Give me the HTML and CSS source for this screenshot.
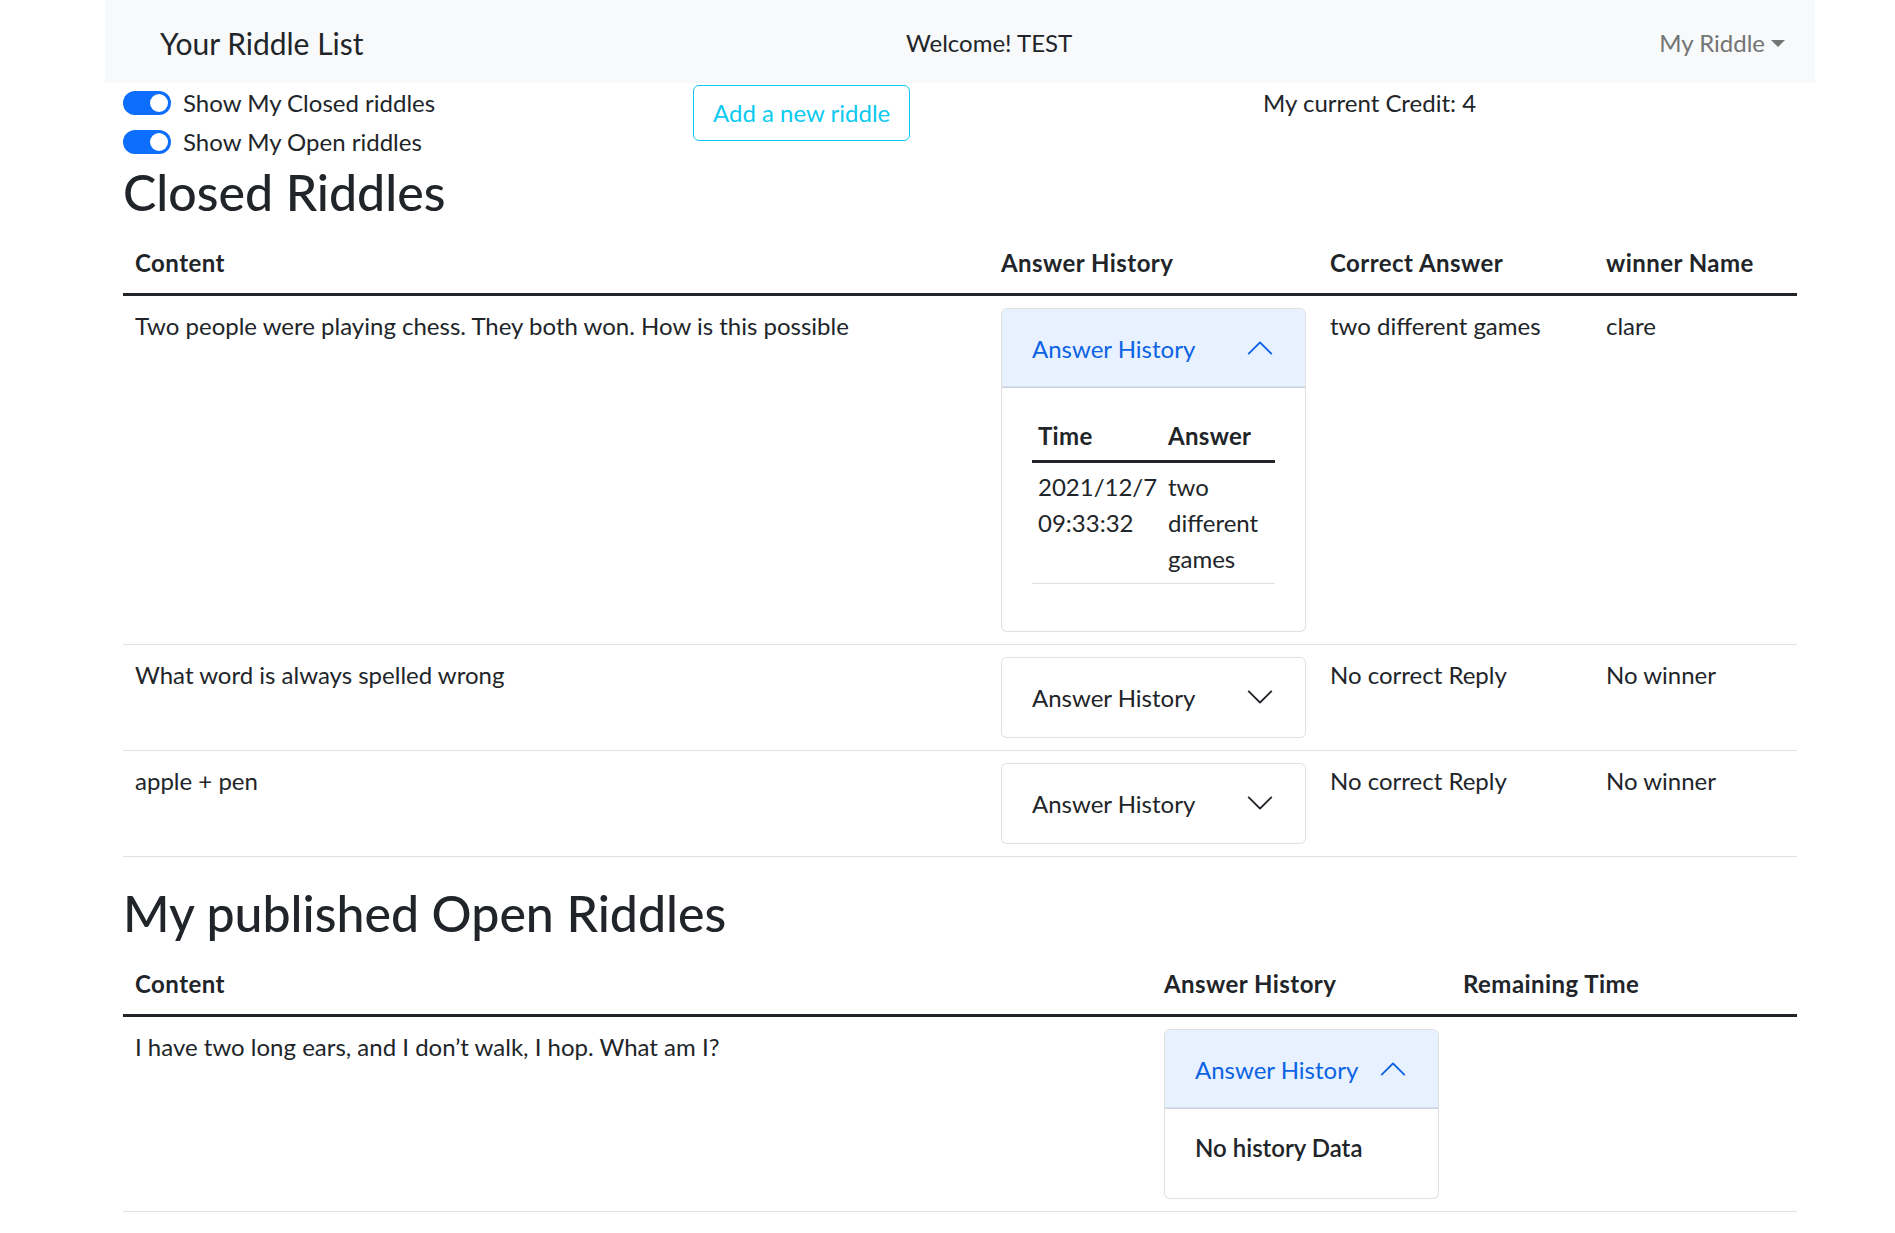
FILE: index.html
```html
<!DOCTYPE html>
<html lang="en">
<head>
<meta charset="utf-8">
<title>Your Riddle List</title>
<link rel="stylesheet" href="styles.css">
</head>
<body>
<div class="page">
  <nav class="navbar">
    <div class="brand">Your Riddle List</div>
    <div class="welcome">Welcome! TEST</div>
    <div class="dropdown">My Riddle<span class="caret"></span></div>
  </nav>
  <main class="container">
    <div class="controls">
      <div class="col">
        <label class="switch-row"><span class="switch"><span class="knob"></span></span>Show My Closed riddles</label>
        <label class="switch-row"><span class="switch"><span class="knob"></span></span>Show My Open riddles</label>
      </div>
      <div class="col">
        <button class="btn-outline">Add a new riddle</button>
      </div>
      <div class="col">
        <div class="credit">My current Credit: 4</div>
      </div>
    </div>

    <h2 class="section-title">Closed Riddles</h2>
    <table class="table">
      <colgroup><col class="c-content1"><col class="c-hist1"><col class="c-correct"><col class="c-winner"></colgroup>
      <thead>
        <tr><th>Content</th><th>Answer History</th><th>Correct Answer</th><th>winner Name</th></tr>
      </thead>
      <tbody>
        <tr>
          <td>Two people were playing chess. They both won. How is this possible</td>
          <td>
            <div class="acc">
              <div class="acc-btn open">Answer History
                <svg class="acc-icon" viewBox="0 0 16 16"><path fill-rule="evenodd" d="M1.646 4.646a.5.5 0 0 1 .708 0L8 10.293l5.646-5.647a.5.5 0 0 1 .708.708l-6 6a.5.5 0 0 1-.708 0l-6-6a.5.5 0 0 1 0-.708z"/></svg>
              </div>
              <div class="acc-body">
                <table class="table-sm">
                  <colgroup><col class="c-time"><col class="c-answer"></colgroup>
                  <thead><tr><th>Time</th><th>Answer</th></tr></thead>
                  <tbody><tr><td>2021/12/7 09:33:32</td><td>two different games</td></tr></tbody>
                </table>
              </div>
            </div>
          </td>
          <td>two different games</td>
          <td>clare</td>
        </tr>
        <tr>
          <td>What word is always spelled wrong</td>
          <td>
            <div class="acc">
              <div class="acc-btn">Answer History
                <svg class="acc-icon" viewBox="0 0 16 16"><path fill-rule="evenodd" d="M1.646 4.646a.5.5 0 0 1 .708 0L8 10.293l5.646-5.647a.5.5 0 0 1 .708.708l-6 6a.5.5 0 0 1-.708 0l-6-6a.5.5 0 0 1 0-.708z"/></svg>
              </div>
            </div>
          </td>
          <td>No correct Reply</td>
          <td>No winner</td>
        </tr>
        <tr>
          <td>apple + pen</td>
          <td>
            <div class="acc">
              <div class="acc-btn">Answer History
                <svg class="acc-icon" viewBox="0 0 16 16"><path fill-rule="evenodd" d="M1.646 4.646a.5.5 0 0 1 .708 0L8 10.293l5.646-5.647a.5.5 0 0 1 .708.708l-6 6a.5.5 0 0 1-.708 0l-6-6a.5.5 0 0 1 0-.708z"/></svg>
              </div>
            </div>
          </td>
          <td>No correct Reply</td>
          <td>No winner</td>
        </tr>
      </tbody>
    </table>

    <h2 class="section-title">My published Open Riddles</h2>
    <table class="table">
      <colgroup><col class="c-content2"><col class="c-hist2"><col class="c-remaining"></colgroup>
      <thead>
        <tr><th>Content</th><th>Answer History</th><th>Remaining Time</th></tr>
      </thead>
      <tbody>
        <tr>
          <td>I have two long ears, and I don’t walk, I hop. What am I?</td>
          <td>
            <div class="acc">
              <div class="acc-btn open">Answer History
                <svg class="acc-icon" viewBox="0 0 16 16"><path fill-rule="evenodd" d="M1.646 4.646a.5.5 0 0 1 .708 0L8 10.293l5.646-5.647a.5.5 0 0 1 .708.708l-6 6a.5.5 0 0 1-.708 0l-6-6a.5.5 0 0 1 0-.708z"/></svg>
              </div>
              <div class="acc-body">
                <h6 class="no-data">No history Data</h6>
              </div>
            </div>
          </td>
          <td></td>
        </tr>
      </tbody>
    </table>
  </main>
</div>
</body>
</html>
```

FILE: styles.css
```css
* { box-sizing: border-box; }

body {
  margin: 0;
  font-family: Lato, "Open Sans", sans-serif;
  font-size: 24px;
  line-height: 36px;
  color: #212529;
  background: #fff;
}

.page {
  width: 1710px;
  margin-left: 105px;
}

.navbar {
  height: 83px;
  background: #f8f9fa;
  display: flex;
  align-items: center;
  padding: 3px 30px 0 55px;
}

.brand {
  flex: 0 0 746px;
  font-size: 30px;
  line-height: 45px;
  color: #212529;
}

.welcome {
  color: #212529;
}

.dropdown {
  margin-left: auto;
  color: #737474;
  display: flex;
  align-items: center;
}

.caret {
  display: inline-block;
  margin-left: 6px;
  border-top: 7px solid #737474;
  border-left: 7px solid transparent;
  border-right: 7px solid transparent;
}

.container {
  padding: 0 18px;
}

.controls {
  display: grid;
  grid-template-columns: repeat(3, 1fr);
  column-gap: 36px;
  margin-top: 2px;
}

.col {
  display: flex;
  flex-direction: column;
  align-items: flex-start;
}

.switch-row {
  display: flex;
  align-items: flex-start;
  min-height: 36px;
  margin-bottom: 3px;
}

.switch {
  width: 48px;
  height: 24px;
  margin-top: 6px;
  margin-right: 12px;
  border-radius: 12px;
  background: #0d6efd;
  display: flex;
  align-items: center;
  justify-content: flex-end;
  padding-right: 3px;
}

.knob {
  width: 18px;
  height: 18px;
  border-radius: 50%;
  background: #fff;
}

.btn-outline {
  font-family: inherit;
  font-size: 24px;
  line-height: 36px;
  padding: 9px 19px;
  color: #0dcaf0;
  background: #fff;
  border: 1.5px solid #0dcaf0;
  border-radius: 6px;
}

.section-title {
  margin: 0 0 12px;
  font-size: 50px;
  line-height: 58px;
  font-weight: 500;
}

.table {
  width: 100%;
  border-collapse: collapse;
  table-layout: fixed;
  margin-bottom: 27px;
}

.table th,
.table td {
  padding: 12px;
  text-align: left;
  vertical-align: top;
}

.table > thead th {
  font-weight: 700;
  letter-spacing: 0.45px;
  border-bottom: 3px solid #212529;
}

.table > tbody > tr > td {
  border-bottom: 1.5px solid #dee2e6;
}

.c-content1 { width: 866px; }
.c-hist1 { width: 329px; }
.c-correct { width: 276px; }
.c-winner { width: 203px; }

.c-content2 { width: 1029px; }
.c-hist2 { width: 299px; }
.c-remaining { width: 346px; }

.acc {
  border: 1.5px solid rgba(0, 0, 0, 0.125);
  border-radius: 6px;
  overflow: hidden;
  background: #fff;
}

.acc-btn {
  display: flex;
  align-items: center;
  padding: 24px 30px 25px;
  line-height: 29px;
  color: #212529;
  background: #fff;
}

.acc-btn.open {
  color: #0c63e4;
  background: #e7f1ff;
  box-shadow: inset 0 -1.5px 0 rgba(0, 0, 0, 0.125);
}

.acc-icon {
  width: 30px;
  height: 30px;
  margin-left: auto;
  flex-shrink: 0;
  fill: #212529;
}

.acc-btn.open .acc-icon {
  fill: #0c63e4;
  transform: rotate(180deg);
}

.acc-body {
  padding: 24px 30px;
}

.table-sm {
  width: 100%;
  border-collapse: collapse;
  table-layout: fixed;
  margin-bottom: 23px;
}

.table-sm th,
.table-sm td {
  padding: 6px;
  text-align: left;
  vertical-align: top;
}

.table-sm th {
  font-weight: 700;
  letter-spacing: 0.3px;
  border-bottom: 3px solid #212529;
}

.table-sm td {
  border-bottom: 1.5px solid #dee2e6;
}

.c-time { width: 130px; }
.c-answer { width: 113px; }

.no-data {
  margin: 0 0 12px;
  font-size: 24px;
  line-height: 29px;
  font-weight: 600;
}
```
